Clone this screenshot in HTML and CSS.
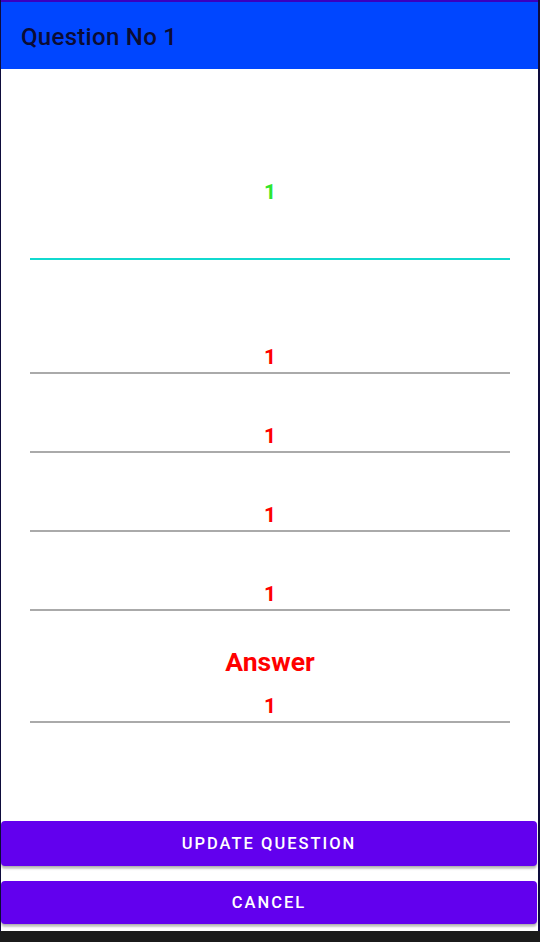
FILE: index.html
```html
<!DOCTYPE html>
<html>
<head>
<meta charset="utf-8">
<link rel="stylesheet" href="styles.css">
</head>
<body>
<div class="frame">
  <div class="status"></div>
  <header class="appbar"><h1 class="title">Question No 1</h1></header>
  <main class="content">
    <div class="field field-question"><span class="value value-green">1</span></div>
    <div class="field field-first"><span class="value">1</span></div>
    <div class="field field-option"><span class="value">1</span></div>
    <div class="field field-option"><span class="value">1</span></div>
    <div class="field field-option"><span class="value">1</span></div>
    <div class="answer-label">Answer</div>
    <div class="field field-answer"><span class="value">1</span></div>
    <div class="actions">
      <button class="btn btn-update">UPDATE QUESTION</button>
      <button class="btn btn-cancel">CANCEL</button>
    </div>
  </main>
</div>
<div class="navbar"></div>
</body>
</html>
```
FILE: styles.css
```css
html, body {
  margin: 0;
  padding: 0;
  background: #1b1b1b;
  font-family: Roboto, "Noto Sans", sans-serif;
}
.frame {
  width: 540px;
  height: 931px;
  box-sizing: border-box;
  border-left: 1px solid #0e0c3c;
  border-right: 2px solid #0e0c3c;
  display: flex;
  flex-direction: column;
  background: #ffffff;
}
.status {
  height: 2px;
  background: #3a00bf;
  flex: none;
}
.appbar {
  height: 67px;
  flex: none;
  background: #0046ff;
  display: flex;
  align-items: center;
  padding-left: 20px;
  padding-top: 2px;
  box-sizing: border-box;
}
.title {
  margin: 0;
  font-size: 24px;
  font-weight: 500;
  color: #0c0c33;
  letter-spacing: 0.3px;
}
.content {
  flex: 1;
  display: flex;
  flex-direction: column;
  padding: 0 28px 0 29px;
  margin: 0;
}
.field {
  display: flex;
  justify-content: center;
  border-bottom: 2px solid #aaaaaa;
  padding-bottom: 3px;
}
.value {
  display: block;
  height: 24px;
  line-height: 24px;
  font-size: 21px;
  font-weight: 700;
  color: #ff0000;
}
.value-green {
  color: #2ee62e;
}
.field-question {
  padding-top: 111px;
  padding-bottom: 54px;
  border-bottom-color: #11d9cf;
}
.field-first {
  padding-top: 85px;
}
.field-option {
  padding-top: 50px;
}
.answer-label {
  margin-top: 37px;
  height: 28px;
  line-height: 28px;
  text-align: center;
  font-size: 26.5px;
  font-weight: 700;
  color: #ff0000;
}
.field-answer {
  padding-top: 18px;
}
.actions {
  margin: auto -28px 0 -29px;
  display: flex;
  flex-direction: column;
  gap: 15px;
  padding-bottom: 7px;
}
.btn {
  height: 45px;
  border: none;
  border-radius: 4px;
  background: #6200ee;
  color: #ffffff;
  font-family: Roboto, "Noto Sans", sans-serif;
  font-size: 16.5px;
  font-weight: 500;
  letter-spacing: 2px;
  box-shadow: 0 3px 2px rgba(0, 0, 0, 0.22), 0 1px 1px rgba(0, 0, 0, 0.12);
  margin-right: 1px;
}
.btn-cancel {
  height: 43px;
}
.navbar {
  height: 11px;
  background: #1b1b1b;
}
```
